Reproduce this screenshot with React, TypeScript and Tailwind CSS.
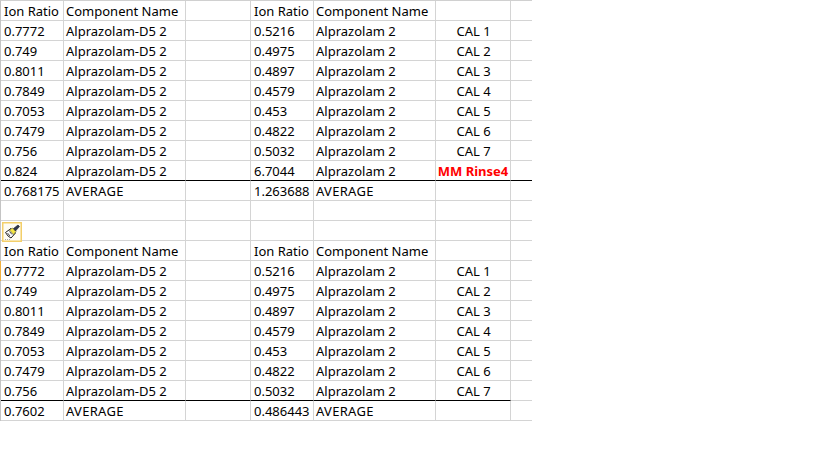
import type { ReactNode } from "react";

const cals = [
  ["0.7772", "0.5216", "CAL 1"],
  ["0.749", "0.4975", "CAL 2"],
  ["0.8011", "0.4897", "CAL 3"],
  ["0.7849", "0.4579", "CAL 4"],
  ["0.7053", "0.453", "CAL 5"],
  ["0.7479", "0.4822", "CAL 6"],
  ["0.756", "0.5032", "CAL 7"],
];

function Cell({ children, className = "", dark = false }: { children?: ReactNode; className?: string; dark?: boolean }) {
  return (
    <div className={`h-5 border-r border-b border-r-[#d4d4d4] leading-[21px] whitespace-nowrap ${dark ? "border-b-black" : "border-b-[#d4d4d4]"} ${className}`}>
      {children}
    </div>
  );
}

type RowProps = { cells?: string[]; dark?: boolean; darkLast?: boolean; red?: boolean; average?: boolean; marked?: boolean };

function Row({ cells = ["", "", "", "", ""], dark, darkLast = dark, red, average, marked }: RowProps) {
  const label = average ? "pl-[2px] tracking-[0.3px]" : "pl-[2px]";
  return (
    <>
      <Cell dark={dark} className="relative pl-[3px]">
        {/* orange selection tick on the sheet's left edge */}
        {marked && <span className="absolute top-0 -left-px h-5 w-px bg-[#f0b040]" />}
        {cells[0]}
      </Cell>
      <Cell dark={dark} className={label}>{cells[1]}</Cell>
      <Cell dark={dark} />
      <Cell dark={dark} className="pl-[3px]">{cells[2]}</Cell>
      <Cell dark={dark} className={label}>{cells[3]}</Cell>
      <Cell dark={dark} className={red ? "text-center font-bold text-[#ff0000]" : "pl-[1px] text-center"}>{cells[4]}</Cell>
      <Cell dark={darkLast} className="border-r-0" />
    </>
  );
}

function Brush() {
  return (
    <svg width="20" height="20" viewBox="0 0 20 20" className="relative z-10 mt-px ml-px block">
      <rect x="0.75" y="0.75" width="18.5" height="18.5" fill="#fefcf4" stroke="#f3cf6a" strokeWidth="1.5" />
      <path d="M3.5 10.5 L9 6.5 L13.5 11 L9 16 Q6 15 3.5 10.5 Z" fill="#ffffff" stroke="#1c1c1c" />
      <path d="M7.5 8 L10.5 6 L14 9.5 L11.5 12.5 Z" fill="#f5e642" stroke="#55502a" strokeWidth="0.6" />
      <path d="M11.5 6.5 L16 3 L17.5 4.5 L13.5 9 Z" fill="#2d3550" stroke="#1c1c1c" strokeWidth="0.6" />
      <path d="M5.5 11 L8 14 M7.5 9.5 L10 12.5" stroke="#1c1c1c" strokeWidth="0.8" />
      <path d="M3 17.5 h1 M5 17.5 h1 M7 17.5 h1" stroke="#a8a8a8" />
    </svg>
  );
}

export default function App() {
  return (
    <div className="h-[460px] w-[819px] bg-white font-['Noto_Sans','Open_Sans',sans-serif] text-[13px] text-black">
      <div className="w-[532px] border-t border-l border-t-[#d0d0d0] border-l-[#c4c4c4]">
        <div className="grid grid-cols-[63px_122px_65px_63px_122px_75px_21px]">
          <Row cells={["Ion Ratio", "Component Name", "Ion Ratio", "Component Name", ""]} />
          {cals.map((r) => (
            <Row key={r[2]} cells={[r[0], "Alprazolam-D5 2", r[1], "Alprazolam 2", r[2]]} />
          ))}
          <Row cells={["0.824", "Alprazolam-D5 2", "6.7044", "Alprazolam 2", "MM Rinse4"]} dark red />
          <Row cells={["0.768175", "AVERAGE", "1.263688", "AVERAGE", ""]} average />
          <Row />
          <Cell><Brush /></Cell>
          <Cell /><Cell /><Cell /><Cell /><Cell /><Cell className="border-r-0" />
          <Row cells={["Ion Ratio", "Component Name", "Ion Ratio", "Component Name", ""]} />
          {cals.slice(0, 6).map((r, i) => (
            <Row key={r[2]} marked={i === 0} cells={[r[0], "Alprazolam-D5 2", r[1], "Alprazolam 2", r[2]]} />
          ))}
          <Row cells={["0.756", "Alprazolam-D5 2", "0.5032", "Alprazolam 2", "CAL 7"]} dark darkLast={false} />
          <Row cells={["0.7602", "AVERAGE", "0.486443", "AVERAGE", ""]} average />
        </div>
      </div>
    </div>
  );
}
